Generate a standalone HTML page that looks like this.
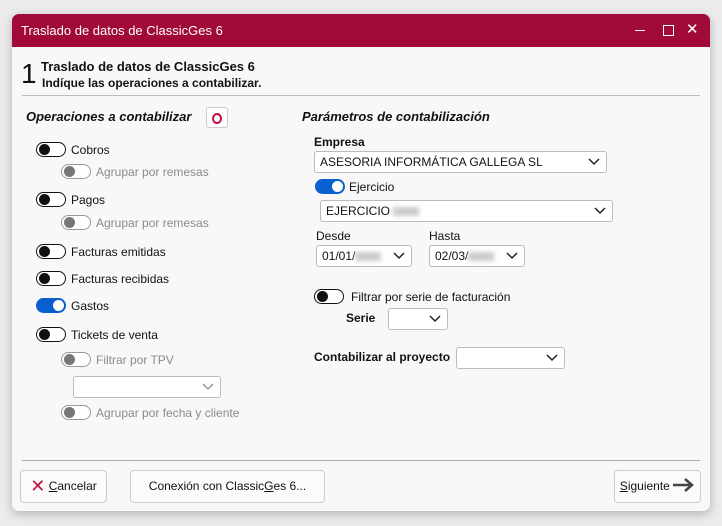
<!DOCTYPE html><html><head><meta charset="utf-8"><style>
body{margin:0;width:722px;height:526px;background:#ececec;font-family:"Liberation Sans",sans-serif;font-size:12px;color:#111;position:relative;overflow:hidden}
.a{position:absolute;white-space:nowrap}
#win{position:absolute;left:12px;top:14px;width:698px;height:497px;background:#f8f8f8;border-radius:7px;box-shadow:0 3px 10px rgba(0,0,0,.25);overflow:hidden}
#tb{position:absolute;left:0;top:0;width:100%;height:33px;background:#a10a37;color:#fff}
.tg{position:absolute;width:30px;height:15px;border:1.5px solid #111;border-radius:9px;box-sizing:border-box;background:#fff;margin-top:-1px}
.tg::after{content:"";position:absolute;left:1.5px;top:0.5px;width:11px;height:11px;border-radius:50%;background:#111}
.tg.off{border-color:#999}.tg.off::after{background:#777}
.tg.on{background:#0a5fd0;border-color:#0a5fd0}.tg.on::after{left:auto;right:1.5px;background:#fff}
.dis{color:#8a8a8a}
.cb{position:absolute;background:#fff;border:1px solid #bbb;border-radius:3px;box-sizing:border-box;height:22px;padding:3px 5px;font-size:12px}
.cb svg{position:absolute;right:6px;top:6px}
.b{font-weight:bold}
.btn{position:absolute;background:#fbfbfb;border:1px solid #ccc;border-radius:4px;box-sizing:border-box;height:33px;text-align:center;line-height:31px}
.blur{display:inline-block;width:26px;height:9px;background:#ccc;filter:blur(2px);vertical-align:middle}
</style></head><body>
<div id="win">
<div id="tb"><div class="a" style="left:9px;top:9px;font-size:13px">Traslado de datos de ClassicGes 6</div>
<div class="a" style="left:623px;top:16px;width:10px;height:1px;background:#fff"></div>
<div class="a" style="left:651px;top:11px;width:9px;height:9px;border:1px solid #fff"></div>
<div class="a" style="left:674px;top:6px;font-size:15px">✕</div></div>
</div>
<div class="a" style="left:21px;top:58px;font-size:28px;font-weight:300">1</div>
<div class="a b" style="left:41px;top:59px;font-size:13px">Traslado de datos de ClassicGes 6</div>
<div class="a b" style="left:42px;top:76px">Indíque las operaciones a contabilizar.</div>
<div class="a" style="left:22px;top:95px;width:678px;height:1px;background:#bbb"></div>
<div class="a b" style="left:26px;top:109px;font-style:italic;font-size:13px">Operaciones a contabilizar</div>
<div class="a" style="left:206px;top:107px;width:22px;height:21px;background:#fff;border:1px solid #ccc;border-radius:3px;box-sizing:border-box"><div class="a" style="left:5px;top:5px;width:6px;height:7px;border:2.5px solid #c0103f;border-radius:50%"></div></div>
<div class="tg" style="left:36px;top:143px"></div><div class="a" style="left:71px;top:143px">Cobros</div>
<div class="tg off" style="left:61px;top:165px"></div><div class="a dis" style="left:96px;top:165px">Agrupar por remesas</div>
<div class="tg" style="left:36px;top:193px"></div><div class="a" style="left:71px;top:193px">Pagos</div>
<div class="tg off" style="left:61px;top:216px"></div><div class="a dis" style="left:96px;top:216px">Agrupar por remesas</div>
<div class="tg" style="left:36px;top:245px"></div><div class="a" style="left:71px;top:245px">Facturas emitidas</div>
<div class="tg" style="left:36px;top:272px"></div><div class="a" style="left:71px;top:272px">Facturas recibidas</div>
<div class="tg on" style="left:36px;top:299px"></div><div class="a" style="left:71px;top:299px">Gastos</div>
<div class="tg" style="left:36px;top:328px"></div><div class="a" style="left:71px;top:328px">Tickets de venta</div>
<div class="tg off" style="left:61px;top:353px"></div><div class="a dis" style="left:96px;top:353px">Filtrar por TPV</div>
<div class="cb" style="left:73px;top:376px;width:148px"><svg width="12" height="8"><path d="M1 1l5 5 5-5" fill="none" stroke="#999" stroke-width="1.5"/></svg></div>
<div class="tg off" style="left:61px;top:406px"></div><div class="a dis" style="left:96px;top:406px">Agrupar por fecha y cliente</div>

<div class="a b" style="left:302px;top:109px;font-style:italic;font-size:13px">Parámetros de contabilización</div>
<div class="a b" style="left:314px;top:135px">Empresa</div>
<div class="cb" style="left:314px;top:151px;width:293px">ASESORIA INFORMÁTICA GALLEGA SL<svg width="12" height="8"><path d="M1 1l5 5 5-5" fill="none" stroke="#222" stroke-width="1.5"/></svg></div>
<div class="tg on" style="left:315px;top:180px"></div><div class="a" style="left:349px;top:180px">Ejercicio</div>
<div class="cb" style="left:320px;top:200px;width:293px">EJERCICIO <span class="blur"></span><svg width="12" height="8"><path d="M1 1l5 5 5-5" fill="none" stroke="#222" stroke-width="1.5"/></svg></div>
<div class="a" style="left:316px;top:229px">Desde</div><div class="a" style="left:429px;top:229px">Hasta</div>
<div class="cb" style="left:316px;top:245px;width:96px">01/01/<span class="blur"></span><svg width="12" height="8"><path d="M1 1l5 5 5-5" fill="none" stroke="#222" stroke-width="1.5"/></svg></div>
<div class="cb" style="left:429px;top:245px;width:96px">02/03/<span class="blur"></span><svg width="12" height="8"><path d="M1 1l5 5 5-5" fill="none" stroke="#222" stroke-width="1.5"/></svg></div>
<div class="tg" style="left:314px;top:290px"></div><div class="a" style="left:351px;top:290px">Filtrar por serie de facturación</div>
<div class="a b" style="left:346px;top:311px">Serie</div>
<div class="cb" style="left:388px;top:308px;width:60px"><svg width="12" height="8"><path d="M1 1l5 5 5-5" fill="none" stroke="#222" stroke-width="1.5"/></svg></div>
<div class="a b" style="left:314px;top:350px">Contabilizar al proyecto</div>
<div class="cb" style="left:456px;top:347px;width:109px"><svg width="12" height="8"><path d="M1 1l5 5 5-5" fill="none" stroke="#222" stroke-width="1.5"/></svg></div>

<div class="a" style="left:22px;top:460px;width:678px;height:1px;background:#aaa"></div>
<div class="btn" style="left:20px;top:470px;width:87px"><span style="color:#c0103f;font-size:18px;vertical-align:-2px">✕</span> <u>C</u>ancelar</div>
<div class="btn" style="left:130px;top:470px;width:195px">Conexión con Classic<u>G</u>es 6...</div>
<div class="btn" style="left:614px;top:470px;width:87px"><u>S</u>iguiente <svg width="22" height="14" style="vertical-align:-2px"><path d="M0 7h18M12 1l7 6-7 6" fill="none" stroke="#444" stroke-width="2.5"/></svg></div>
</body></html>
